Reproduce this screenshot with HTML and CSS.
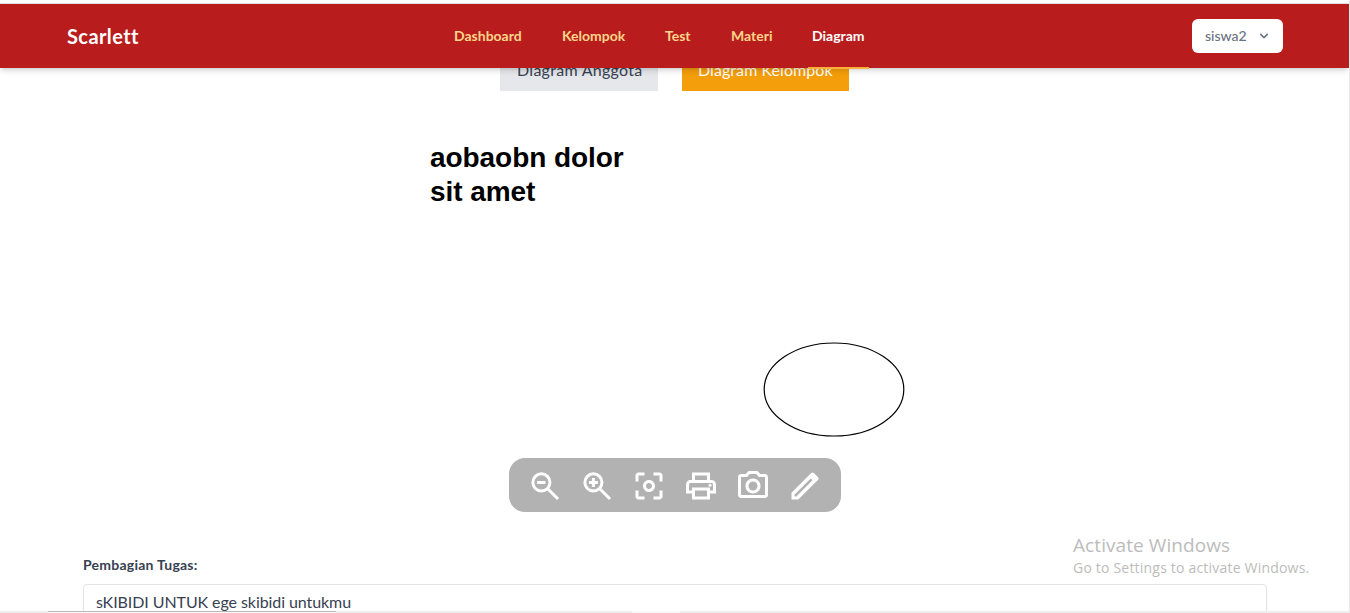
FILE: index.html
```html
<!DOCTYPE html>
<html lang="id">
<head>
<meta charset="utf-8">
<title>Scarlett</title>
<link rel="stylesheet" href="styles.css">
</head>
<body>
<div class="page">
  <header class="navbar">
    <div class="brand">Scarlett</div>
    <nav class="links">
      <a class="link dashboard">Dashboard</a>
      <a class="link kelompok">Kelompok</a>
      <a class="link test">Test</a>
      <a class="link materi">Materi</a>
      <a class="link diagram active">Diagram</a>
    </nav>
    <button class="user"><span>siswa2</span>
      <svg width="16" height="16" viewBox="0 0 20 20" fill="currentColor"><path d="M5.293 7.293a1 1 0 011.414 0L10 10.586l3.293-3.293a1 1 0 111.414 1.414l-4 4a1 1 0 01-1.414 0l-4-4a1 1 0 010-1.414z"/></svg>
    </button>
  </header>
  <div class="tabs">
    <a class="tab members">Diagram Anggota</a>
    <a class="tab group">Diagram Kelompok</a>
  </div>
  <main class="canvas">
    <div class="note">aobaobn dolor<br>sit amet</div>
    <svg class="ellipse" width="142" height="96" viewBox="0 0 142 96"><ellipse cx="71" cy="47.5" rx="69.8" ry="46.5" fill="none" stroke="#000" stroke-width="1.2"/></svg>
    <div class="toolbar">
      <svg viewBox="0 0 24 24"><g class="lens"><circle cx="9.600" cy="9.600" r="5.700"/><path d="M13.800 13.800L20.700 20.700M6.700 9.600h5.600"/></g></svg>
      <svg viewBox="0 0 24 24"><g class="lens"><circle cx="9.600" cy="9.600" r="5.700"/><path d="M13.800 13.800L20.700 20.700M6.600 9.600h6M9.600 6.600v6"/></g></svg>
      <svg viewBox="0 0 24 24"><path d="M5 15H3v4c0 1.100.9 2 2 2h4v-2H5v-4zM5 5h4V3H5c-1.100 0-2 .9-2 2v4h2V5zm14-2h-4v2h4v4h2V5c0-1.100-.9-2-2-2zm0 16h-4v2h4c1.100 0 2-.9 2-2v-4h-2v4zM12 8c-2.210 0-4 1.790-4 4s1.790 4 4 4 4-1.790 4-4-1.790-4-4-4zm0 6c-1.100 0-2-.9-2-2s.9-2 2-2 2 .9 2 2-.9 2-2 2z"/></svg>
      <svg viewBox="0 0 24 24"><path d="M19 8h-1V3H6v5H5c-1.660 0-3 1.340-3 3v6h4v4h12v-4h4v-6c0-1.660-1.340-3-3-3zM8 5h8v3H8V5zm8 12v2H8v-4h8v2zm2-2v-2H6v2H4v-4c0-.55.45-1 1-1h14c.55 0 1 .45 1 1v4h-2z"/><circle cx="18" cy="11.500" r="1"/></svg>
      <svg viewBox="0 0 24 24"><path d="M14.120 4l1.830 2H20v12H4V6h4.050l1.830-2h4.240M15 2H9L7.170 4H4c-1.100 0-2 .9-2 2v12c0 1.100.9 2 2 2h16c1.100 0 2-.9 2-2V6c0-1.100-.9-2-2-2h-3.170L15 2zm-3 7c1.650 0 3 1.350 3 3s-1.350 3-3 3-3-1.350-3-3 1.350-3 3-3m0-2c-2.760 0-5 2.240-5 5s2.240 5 5 5 5-2.240 5-5-2.240-5-5-5z"/></svg>
      <svg viewBox="0 0 24 24"><path fill-rule="evenodd" d="M3 21v-4.500L16 3.500q.9-.8 1.900-.2l2.800 2.800q.8.900.1 1.800L7.500 21zM5 19h1.200L17 8.200 15.800 7 5 17.800z"/></svg>
    </div>
  </main>
  <section class="tasks">
    <h2 class="tasks-title">Pembagian Tugas:</h2>
    <div class="task-field">sKIBIDI UNTUK ege skibidi untukmu</div>
  </section>
  <aside class="watermark">
    <div class="wm-title">Activate Windows</div>
    <div class="wm-text">Go to Settings to activate Windows.</div>
  </aside>
  <div class="edge"><span class="edge-tab"></span><span class="edge-gap"></span></div>
</div>
</body>
</html>
```
FILE: styles.css
```css
* { box-sizing: border-box; }
body { margin: 0; background: #fff; font-family: Lato, sans-serif; color: #374151; overflow: hidden; }
.page { position: relative; width: 1350px; height: 613px; padding-top: 3px; border-right: 1px solid #e9e9e9; overflow: hidden; display: flex; flex-direction: column; }
.navbar { position: relative; z-index: 2; flex: none; height: 65px; border-top: 1px solid #e5dcdc; background: #b91c1c; display: flex; align-items: center; padding: 0 66px 0 67px; box-shadow: 0 4px 6px -1px rgba(0,0,0,.13), 0 2px 4px -2px rgba(0,0,0,.13); }
.brand { width: 387px; font-size: 20px; font-weight: 700; color: #fff; white-space: nowrap; letter-spacing: .4px; font-variant-ligatures: none; }
.links { display: flex; gap: 40px; height: 64px; }
.link { font-size: 14px; font-weight: 700; line-height: 64px; color: #fcd58a; white-space: nowrap; }
.dashboard { width: 68px; }
.kelompok { width: 63px; }
.test { width: 26px; }
.materi { width: 40px; }
.diagram { width: 61px; margin-left: -3px; padding-left: 4px; height: 65px; }
.active { color: #fff; border-bottom: 2px solid #fbb03b; }
.user { margin-left: auto; width: 91px; height: 34px; padding: 0 11px 0 13px; border: 0; border-radius: 6px; background: #fff; color: #6b7280; font: 500 14px Lato, sans-serif; display: flex; align-items: center; justify-content: space-between; }
.user span { padding-bottom: 2px; }
.tabs { flex: none; display: flex; gap: 24px; margin: -17px 0 0 500px; }
.tab { height: 40px; padding: 7px 0 9px 17px; font-size: 16px; line-height: 24px; white-space: nowrap; }
.members { width: 158px; background: #e5e7eb; letter-spacing: .27px; }
.group { width: 167px; padding-left: 16px; background: #f59e0b; color: #fff; letter-spacing: .06px; }
.canvas { flex: none; height: 464px; display: grid; grid-template-rows: 251px 116px 54px; }
.note { padding: 50px 0 0 430px; font: 700 28px/34px "Liberation Sans", sans-serif; color: #000; letter-spacing: -.06px; }
.ellipse { margin-left: 763px; }
.toolbar { justify-self: center; width: 332px; height: 54px; padding: 10px 18px 8px; border-radius: 16px; background: #b2b2b2; display: flex; gap: 16px; }
.toolbar svg { width: 36px; height: 36px; fill: #fff; }
.lens { fill: none; stroke: #fff; stroke-width: 2; }
.tasks { flex: none; margin: 0 82px 0 83px; }
.tasks-title { margin: 0 0 9px; font-size: 14px; line-height: 20px; font-weight: 700; letter-spacing: .24px; }
.task-field { height: 42px; border: 1px solid #e2e4e8; border-radius: 4px; padding: 5px 12px; font-size: 16px; line-height: 24px; letter-spacing: -.08px; box-shadow: 0 1px 2px rgba(0,0,0,.06); }
.watermark { position: absolute; left: 1073px; top: 533px; color: #bcbcbc; font-family: "Open Sans", sans-serif; white-space: nowrap; }
.wm-title { font-size: 19px; line-height: 24px; letter-spacing: .08px; }
.wm-text { font-size: 14px; line-height: 21px; letter-spacing: .2px; }
.edge { position: absolute; left: 0; right: 0; bottom: 0; height: 2px; background: #eee; display: flex; }
.edge-tab { width: 288px; margin-left: 48px; background: #fafafa; border-top: 1px solid #b9b9b9; }
.edge-gap { width: 48px; margin-left: 296px; background: #f8f8f8; }
```
